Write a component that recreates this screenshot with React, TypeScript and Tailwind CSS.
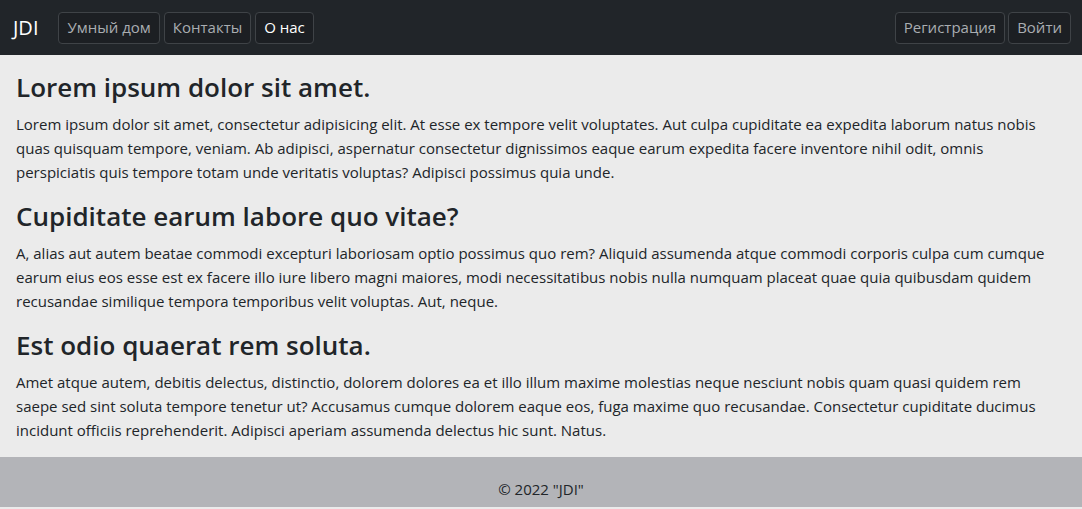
const navLinks = [
  { label: 'Умный дом', active: false },
  { label: 'Контакты', active: false },
  { label: 'О нас', active: true },
]

const sections = [
  {
    title: 'Lorem ipsum dolor sit amet.',
    text: 'Lorem ipsum dolor sit amet, consectetur adipisicing elit. At esse ex tempore velit voluptates. Aut culpa cupiditate ea expedita laborum natus nobis quas quisquam tempore, veniam. Ab adipisci, aspernatur consectetur dignissimos eaque earum expedita facere inventore nihil odit, omnis perspiciatis quis tempore totam unde veritatis voluptas? Adipisci possimus quia unde.',
  },
  {
    title: 'Cupiditate earum labore quo vitae?',
    text: 'A, alias aut autem beatae commodi excepturi laboriosam optio possimus quo rem? Aliquid assumenda atque commodi corporis culpa cum cumque earum eius eos esse est ex facere illo iure libero magni maiores, modi necessitatibus nobis nulla numquam placeat quae quia quibusdam quidem recusandae similique tempora temporibus velit voluptas. Aut, neque.',
  },
  {
    title: 'Est odio quaerat rem soluta.',
    text: 'Amet atque autem, debitis delectus, distinctio, dolorem dolores ea et illo illum maxime molestias neque nesciunt nobis quam quasi quidem rem saepe sed sint soluta tempore tenetur ut? Accusamus cumque dolorem eaque eos, fuga maxime quo recusandae. Consectetur cupiditate ducimus incidunt officiis reprehenderit. Adipisci aperiam assumenda delectus hic sunt. Natus.',
  },
]

const btn = 'h-8 px-[8px] rounded-[4px] border border-[#3f4347] bg-[#1c1f23] text-[15px] leading-none flex items-center'

export default function App() {
  return (
    <div className="min-h-screen bg-[#ebebeb] text-[#212529] font-['Open_Sans',sans-serif]">
      {/* Navbar */}
      <nav className="h-[55px] bg-[#212529] flex items-center justify-between pl-[13px] pr-[11px]">
        <div className="flex items-center">
          <span className="text-white text-[20px] mr-[20px]">JDI</span>
          <div className="flex gap-1">
            {navLinks.map((link) => (
              <a key={link.label} className={`${btn} ${link.active ? 'text-white' : 'text-[#a9adb1]'}`}>
                {link.label}
              </a>
            ))}
          </div>
        </div>
        <div className="flex gap-[3px]">
          <a className={`${btn} text-[#a9adb1]`}>Регистрация</a>
          <a className={`${btn} text-[#a9adb1]`}>Войти</a>
        </div>
      </nav>

      {/* Content */}
      <main className="px-4 pt-4">
        {sections.map((s) => (
          <section key={s.title} className="mb-4 last:mb-[15px]">
            <h3 className="text-[26px] leading-[33px] font-semibold mb-2">{s.title}</h3>
            <p className="text-[15px] leading-6">{s.text}</p>
          </section>
        ))}
      </main>

      {/* Footer */}
      <footer className="h-[50px] bg-[#b3b4b8] flex justify-center pt-[20px]">
        <p className="text-[15px] leading-6">© 2022 "JDI"</p>
      </footer>
    </div>
  )
}
